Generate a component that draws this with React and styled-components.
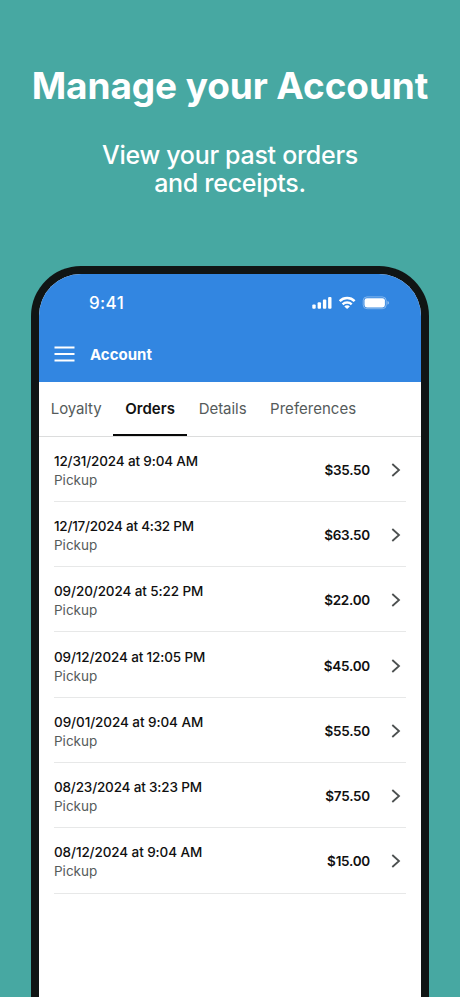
import React from "react";
import styled, { createGlobalStyle } from "styled-components";

const GlobalStyle = createGlobalStyle`
  * {
    box-sizing: border-box;
  }
  body {
    margin: 0;
    background: #47a8a2;
    font-family: Inter, "Liberation Sans", sans-serif;
  }
  h1,
  p {
    margin: 0;
  }
`;

const Page = styled.div`
  width: 460px;
  height: 997px;
  overflow: hidden;
  display: flex;
  flex-direction: column;
  align-items: center;
  background: #47a8a2;
`;

const Intro = styled.header`
  flex: none;
  height: 266px;
  padding-top: 62px;
  text-align: center;
  color: #fff;
  white-space: nowrap;
`;

const Title = styled.h1`
  font-size: 37px;
  line-height: 48px;
  font-weight: 700;
  letter-spacing: -0.1px;
`;

const Subtitle = styled.p`
  margin-top: 31px;
  font-size: 25px;
  line-height: 28px;
  font-weight: 500;
  letter-spacing: -0.3px;
`;

const Phone = styled.main`
  flex: none;
  width: 398px;
  height: 790px;
  padding: 8px 8px 0;
  border-radius: 50px 50px 0 0;
  background: #101514;
`;

const Screen = styled.div`
  height: 100%;
  overflow: hidden;
  border-radius: 42px 42px 0 0;
  background: #fff;
`;

const TopBar = styled.div`
  height: 107.5px;
  background: #3286e1;
  color: #fff;
`;

const StatusBar = styled.div`
  height: 53px;
  display: flex;
  align-items: center;
  justify-content: space-between;
  padding: 5px 31px 0 50px;
`;

const Clock = styled.span`
  font-size: 17px;
  line-height: 20px;
  font-weight: 500;
  letter-spacing: 0.35px;
`;

const StatusIcons = styled.div`
  display: flex;
  svg {
    display: block;
  }
`;

const AppBar = styled.div`
  height: 54px;
  display: flex;
  align-items: center;
  gap: 15px;
  padding-left: 15px;
`;

const AppTitle = styled.span`
  font-size: 15px;
  font-weight: 700;
`;

const Tabs = styled.nav`
  height: 55px;
  display: flex;
  border-bottom: 1px solid #dcdddd;
`;

const Tab = styled.div`
  height: 54px;
  padding: 0 11.8px;
  line-height: 54px;
  font-size: 15px;
  white-space: nowrap;
  letter-spacing: ${(props) => props.$spacing || "0"};
  font-weight: ${(props) => (props.$active ? 600 : 400)};
  color: ${(props) => (props.$active ? "#111" : "#555b5b")};
  border-bottom: ${(props) => (props.$active ? "2px solid #080808" : "none")};
`;

const Orders = styled.div`
  padding: 0 15px;
`;

const OrderRow = styled.div`
  height: 65.3px;
  display: flex;
  align-items: center;
  border-bottom: 1px solid #e7e8e8;
`;

const OrderInfo = styled.div`
  flex: 1;
  padding-top: 4px;
  line-height: 19px;
`;

const OrderDate = styled.p`
  font-size: 13.5px;
  font-weight: 500;
  color: #101010;
  letter-spacing: ${(props) => props.$spacing || "0"};
`;

const OrderType = styled.p`
  font-size: 13.5px;
  color: #565b5b;
`;

const Amount = styled.span`
  margin-top: 2px;
  margin-right: 21px;
  font-size: 13.5px;
  font-weight: 600;
  letter-spacing: -0.25px;
  color: #101010;
`;

const ChevronWrap = styled.span`
  width: 15px;
  display: flex;
  padding-top: 2px;
`;

const tabs = [
  { name: "Loyalty", spacing: "-0.1px" },
  { name: "Orders", active: true, spacing: "0.06px" },
  { name: "Details", spacing: "-0.05px" },
  { name: "Preferences", spacing: "0.02px" },
];

const orders = [
  { date: "12/31/2024 at 9:04 AM", amount: "$35.50", spacing: "-0.15px" },
  { date: "12/17/2024 at 4:32 PM", amount: "$63.50", spacing: "-0.25px" },
  { date: "09/20/2024 at 5:22 PM", amount: "$22.00", spacing: "-0.1px" },
  { date: "09/12/2024 at 12:05 PM", amount: "$45.00", spacing: "-0.14px" },
  { date: "09/01/2024 at 9:04 AM", amount: "$55.50", spacing: "-0.07px" },
  { date: "08/23/2024 at 3:23 PM", amount: "$75.50", spacing: "-0.17px" },
  { date: "08/12/2024 at 9:04 AM", amount: "$15.00", spacing: "-0.1px" },
];

const MenuIcon = () => (
  <svg width="21" height="16" viewBox="0 0 21 16">
    <path d="M.5 1.500h20M.5 8h20M.5 14.500h20" stroke="#fff" strokeWidth="1.8" />
  </svg>
);

// signal, wifi and battery
const StatusGlyphs = () => (
  <svg width="78" height="14" viewBox="0 0 78 14" fill="#fff">
    <rect x="0.3" y="8.4" width="3.4" height="4.3" rx="1" />
    <rect x="5.6" y="6.2" width="3.4" height="6.5" rx="1" />
    <rect x="10.9" y="3.6" width="3.4" height="9.1" rx="1" />
    <rect x="16.1" y="0.9" width="3.4" height="11.8" rx="1" />
    <g fill="none" stroke="#fff" strokeWidth="2.5">
      <path d="M27.7 5.1a10.6 10.6 0 0 1 14.9 0" />
      <path d="M30.6 8.3a6.6 6.6 0 0 1 9.1 0" />
    </g>
    <path d="M32.3 10.4a3.8 3.8 0 0 1 5.6 0l-2.8 2.6z" />
    <rect
      x="51.2"
      y="0.9"
      width="23"
      height="11.8"
      rx="3.8"
      fill="none"
      stroke="#fff"
      strokeOpacity=".4"
    />
    <rect x="52.5" y="2.2" width="20.4" height="9.2" rx="2.4" />
    <path d="M75.5 4.9v3.8c.9-.3 1.4-1 1.4-1.9s-.5-1.6-1.4-1.9z" opacity=".5" />
  </svg>
);

const Chevron = () => (
  <svg width="10" height="14" viewBox="0 0 10 14">
    <path d="M1.3 1l6.700 6-6.700 6" fill="none" stroke="#4c5050" strokeWidth="1.8" />
  </svg>
);

const App = () => {
  return (
    <Page>
      <GlobalStyle />
      <Intro>
        <Title>Manage your Account</Title>
        <Subtitle>
          View your past orders
          <br />
          and receipts.
        </Subtitle>
      </Intro>
      <Phone>
        <Screen>
          <TopBar>
            <StatusBar>
              <Clock>9:41</Clock>
              <StatusIcons>
                <StatusGlyphs />
              </StatusIcons>
            </StatusBar>
            <AppBar>
              <MenuIcon />
              <AppTitle>Account</AppTitle>
            </AppBar>
          </TopBar>
          <Tabs>
            {tabs.map((tab) => (
              <Tab key={tab.name} $active={tab.active} $spacing={tab.spacing}>
                {tab.name}
              </Tab>
            ))}
          </Tabs>
          <Orders>
            {orders.map((order) => (
              <OrderRow key={order.date}>
                <OrderInfo>
                  <OrderDate $spacing={order.spacing}>{order.date}</OrderDate>
                  <OrderType>Pickup</OrderType>
                </OrderInfo>
                <Amount>{order.amount}</Amount>
                <ChevronWrap>
                  <Chevron />
                </ChevronWrap>
              </OrderRow>
            ))}
          </Orders>
        </Screen>
      </Phone>
    </Page>
  );
};

export default App;
